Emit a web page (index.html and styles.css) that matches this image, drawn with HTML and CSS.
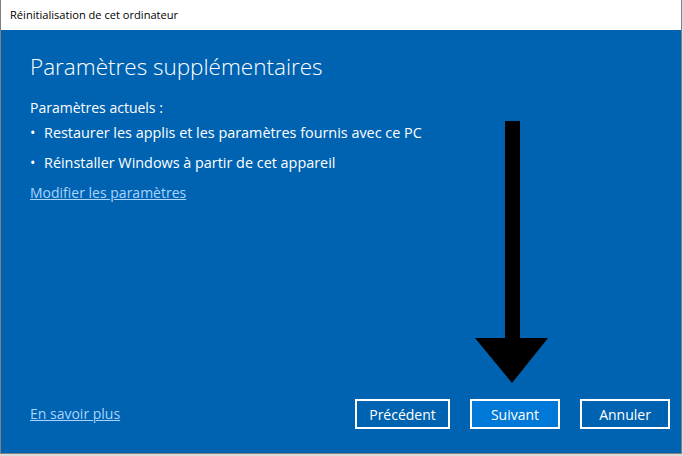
FILE: index.html
```html
<!DOCTYPE html>
<html lang="fr">
<head>
<meta charset="utf-8">
<title>Réinitialisation de cet ordinateur</title>
<link rel="stylesheet" href="styles.css">
</head>
<body>
<div class="window">
  <div class="titlebar">Réinitialisation de cet ordinateur</div>
  <div class="content">
    <h1 class="heading">Paramètres supplémentaires</h1>
    <p class="label">Paramètres actuels :</p>
    <ul class="list">
      <li>Restaurer les applis et les paramètres fournis avec ce PC</li>
      <li>Réinstaller Windows à partir de cet appareil</li>
    </ul>
    <a class="link modify" href="#">Modifier les paramètres</a>
    <div class="spacer"></div>
    <div class="footer">
      <a class="link" href="#">En savoir plus</a>
      <div class="buttons">
        <button class="btn">Précédent</button>
        <button class="btn primary">Suivant</button>
        <button class="btn">Annuler</button>
      </div>
    </div>
    <svg class="arrow" width="76" height="264" viewBox="0 0 76 264">
      <path d="M30 0 H45 V217 H73 L37 262 L0 217 H30 Z" fill="#000"/>
    </svg>
  </div>
</div>
</body>
</html>
```
FILE: styles.css
```css
html, body {
  margin: 0;
  padding: 0;
}
body {
  background: #dcdcdc;
  width: 683px;
  height: 456px;
  overflow: hidden;
  font-family: "Open Sans", "Noto Sans", sans-serif;
}
.window {
  width: 682px;
  height: 454px;
  box-sizing: border-box;
  border-left: 1px solid #808080;
  border-right: 1px solid #808080;
  border-bottom: 1px solid #808080;
  display: flex;
  flex-direction: column;
}
.titlebar {
  height: 30px;
  flex: none;
  background: #fff;
  color: #000;
  font-size: 11.1px;
  line-height: 30px;
  padding-left: 9px;
  box-sizing: border-box;
}
.content {
  position: relative;
  flex: 1;
  background: #0063b1;
  color: #fff;
  display: flex;
  flex-direction: column;
  padding: 0 11px 24px 29px;
}
.heading {
  margin: 19px 0 0;
  font-size: 22.5px;
  font-weight: 300;
  line-height: 36px;
}
.label {
  margin: 13px 0 0;
  font-size: 14px;
  line-height: 20px;
}
.list {
  list-style: none;
  margin: 0;
  padding: 0;
}
.list li {
  font-size: 14.4px;
  line-height: 20px;
  margin-top: 10px;
  position: relative;
  padding-left: 14px;
}
.list li:first-child {
  margin-top: 5px;
}
.list li::before {
  content: "•";
  position: absolute;
  left: 0;
}
.link {
  color: #a6d4ff;
  text-decoration: underline;
  font-size: 14px;
  line-height: 20px;
}
.modify {
  margin-top: 10px;
  align-self: flex-start;
}
.spacer {
  flex: 1;
}
.footer {
  display: flex;
  align-items: center;
  justify-content: space-between;
}
.buttons {
  display: flex;
  gap: 20px;
}
.btn {
  font-family: inherit;
  font-size: 14px;
  color: #fff;
  background: transparent;
  border: 2px solid #fff;
  height: 30px;
  width: 95px;
  padding: 0;
  box-sizing: border-box;
}
.btn.primary {
  width: 90px;
  background: #0078d7;
}
.buttons .btn:last-child {
  width: 90px;
}
.arrow {
  position: absolute;
  left: 474px;
  top: 91px;
}
```
